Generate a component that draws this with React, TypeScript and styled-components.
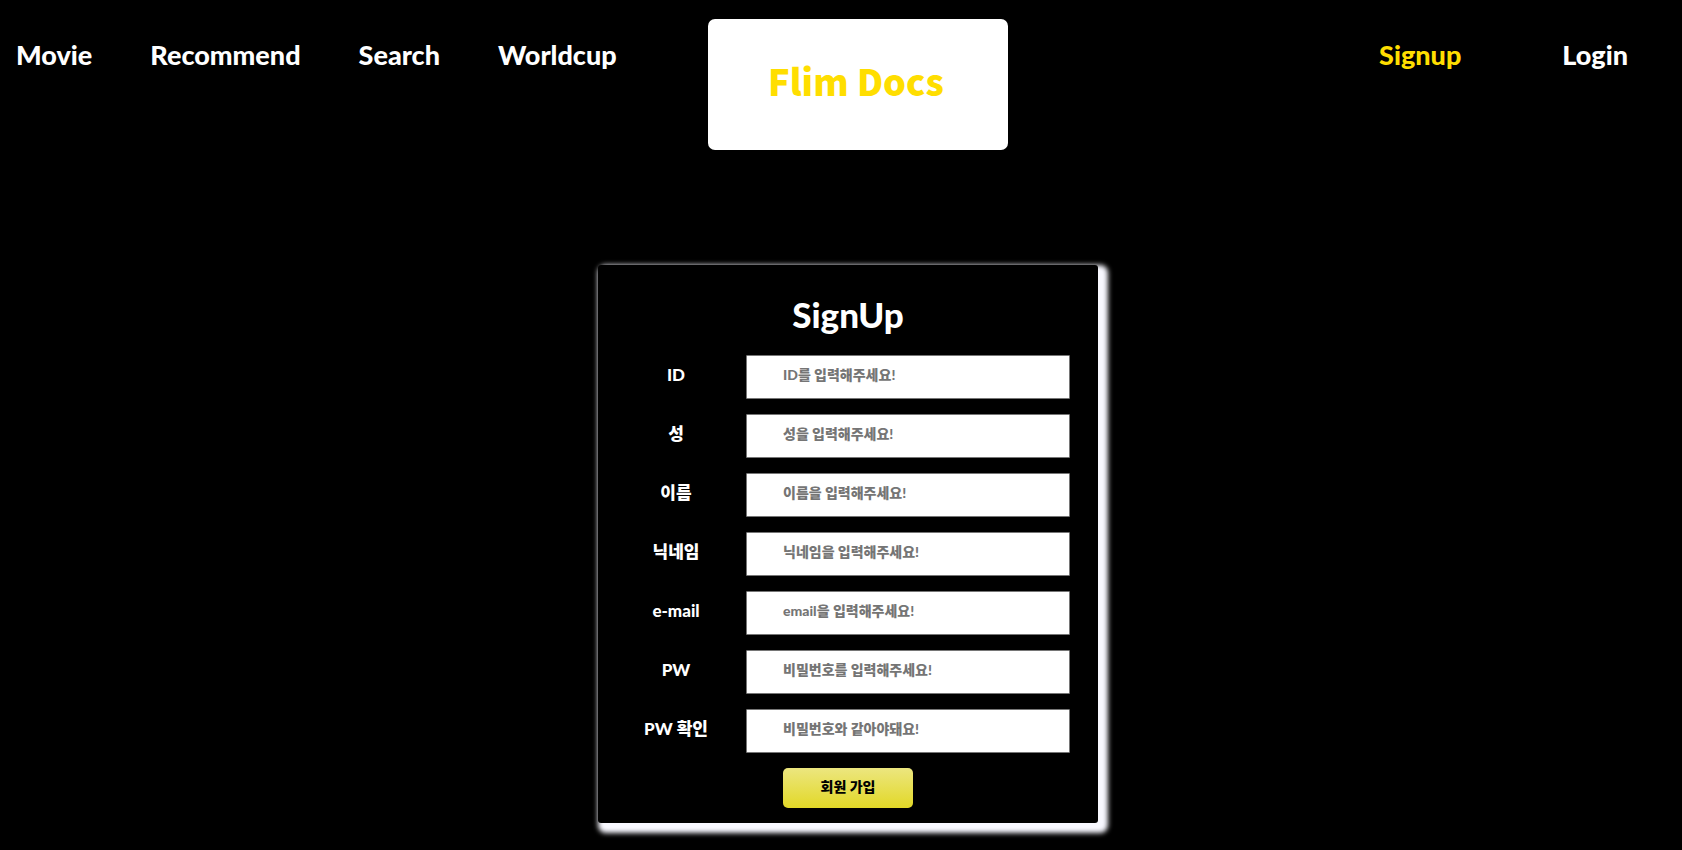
import React from "react";
import styled, { createGlobalStyle } from "styled-components";

const GlobalStyle = createGlobalStyle`
  *, *::before, *::after { box-sizing: border-box; }
  body {
    margin: 0;
    background: #000;
    color: #fff;
    font-family: Lato, "Noto Sans CJK KR", sans-serif;
    font-weight: 900;
  }
`;

const Page = styled.div`
  min-height: 100vh;
  padding-bottom: 27px;
`;

const Header = styled.header`
  display: grid;
  grid-template-columns: 21fr 300px 20fr;
  align-items: start;
  padding-top: 19px;
`;

const Nav = styled.nav<{ $end?: boolean }>`
  display: flex;
  justify-content: ${(p) => (p.$end ? "flex-end" : "flex-start")};
  gap: ${(p) => (p.$end ? 101 : 58)}px;
  padding: ${(p) => (p.$end ? "20px 54px 0 0" : "20px 0 0 16px")};
`;

const NavLink = styled.a<{ $active?: boolean }>`
  color: ${(p) => (p.$active ? "#ffde00" : "#fff")};
  font-size: 27px;
  line-height: 32px;
  text-decoration: none;
`;

const Logo = styled.a`
  display: flex;
  justify-content: center;
  height: 131px;
  padding: 33px 4px 0 0;
  border-radius: 7px;
  background: #fff;
  color: #ffde00;
  font-family: "Noto Sans CJK KR", sans-serif;
  font-size: 36px;
  font-weight: 900;
  line-height: 56px;
  text-decoration: none;
`;

const Main = styled.main`
  display: flex;
  justify-content: center;
  padding: 115px 0 0 14px;
`;

const Card = styled.form`
  display: flex;
  flex-direction: column;
  align-items: center;
  width: 500px;
  padding: 28px 28px 15px;
  border-radius: 3px;
  background: #000;
  box-shadow: 5px 5px 5px 5px ghostwhite;
`;

const Title = styled.h1`
  margin: 0 0 20px;
  font-size: 35px;
  font-weight: 900;
  line-height: 42px;
`;

const Field = styled.div`
  display: grid;
  grid-template-columns: 100px 1fr;
  column-gap: 20px;
  width: 100%;
  margin-bottom: 15px;
`;

const Label = styled.label`
  font-size: 17px;
  line-height: 40px;
  text-align: center;
`;

const Input = styled.input`
  width: 100%;
  height: 44px;
  padding: 0 36px 6px;
  border: 1px solid #767676;
  border-radius: 1px;
  background: #fff;
  color: #000;
  font-family: inherit;
  font-size: 14px;
  font-weight: 900;

  &::placeholder {
    color: #757575;
    opacity: 1;
  }
`;

const Submit = styled.button`
  width: 130px;
  height: 40px;
  padding: 0 0 4px;
  border: 0;
  border-radius: 5px;
  background: linear-gradient(#ece67f, #e2d827);
  color: #000;
  font-family: inherit;
  font-size: 14px;
  font-weight: 900;
  cursor: pointer;
`;

const fields = [
  { id: "userid", label: "ID", hint: "ID를 입력해주세요!", type: "text" },
  { id: "lastname", label: "성", hint: "성을 입력해주세요!", type: "text" },
  { id: "firstname", label: "이름", hint: "이름을 입력해주세요!", type: "text" },
  { id: "nickname", label: "닉네임", hint: "닉네임을 입력해주세요!", type: "text" },
  { id: "email", label: "e-mail", hint: "email을 입력해주세요!", type: "email" },
  { id: "pw", label: "PW", hint: "비밀번호를 입력해주세요!", type: "password" },
  { id: "pwcheck", label: "PW 확인", hint: "비밀번호와 같아야돼요!", type: "password" },
];

export default function App() {
  return (
    <Page>
      <GlobalStyle />
      <Header>
        <Nav>
          <NavLink href="#movie">Movie</NavLink>
          <NavLink href="#recommend">Recommend</NavLink>
          <NavLink href="#search">Search</NavLink>
          <NavLink href="#worldcup">Worldcup</NavLink>
        </Nav>
        <Logo href="#home">Flim Docs</Logo>
        <Nav $end>
          <NavLink href="#signup" $active>Signup</NavLink>
          <NavLink href="#login">Login</NavLink>
        </Nav>
      </Header>
      <Main>
        <Card onSubmit={(e) => e.preventDefault()}>
          <Title>SignUp</Title>
          {fields.map((f) => (
            <Field key={f.id}>
              <Label htmlFor={f.id}>{f.label}</Label>
              <Input id={f.id} type={f.type} placeholder={f.hint} />
            </Field>
          ))}
          <Submit type="submit">회원 가입</Submit>
        </Card>
      </Main>
    </Page>
  );
}
